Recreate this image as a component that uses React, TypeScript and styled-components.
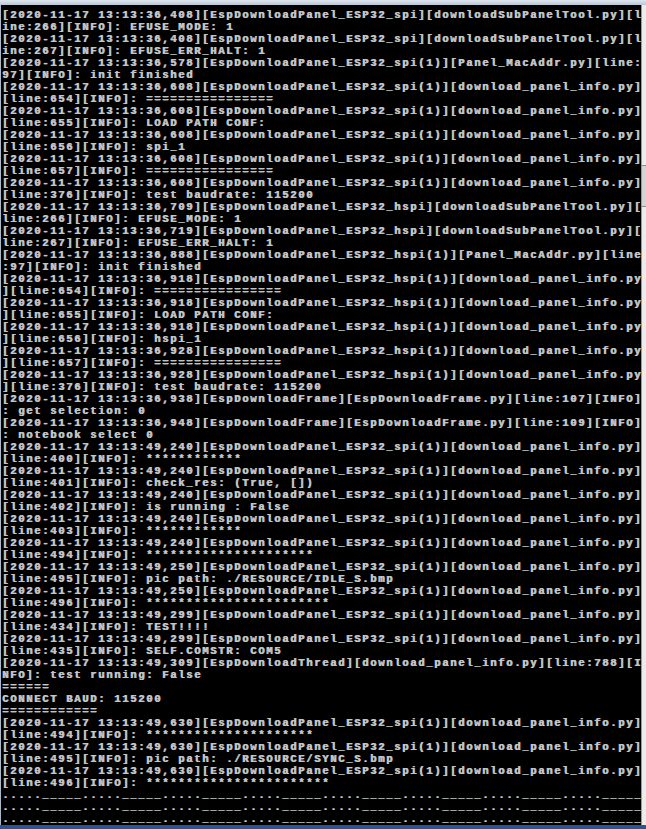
import React from "react";
import styled, { createGlobalStyle } from "styled-components";

const Global = createGlobalStyle`
  html, body { margin: 0; padding: 0; background: #000; }
  body { width: 646px; height: 829px; overflow: hidden; }
`;

const Window = styled.div`
  width: 646px;
  height: 829px;
  display: flex;
  flex-direction: column;
  background: #000;
  overflow: hidden;
`;

const TitleStrip = styled.div`
  height: 5px;
  flex: none;
  background: linear-gradient(to bottom, #dfe6ef, #b9c6d6);
`;

const Body = styled.div`
  flex: 1;
  display: flex;
  min-height: 0;
`;

const Console = styled.pre`
  margin: 0;
  flex: 1;
  padding: 4px 0 0 1px;
  border-left: 1px solid #aeb9c8;
  background: #000;
  color: #c4c4c4;
  font-family: "Liberation Mono", monospace;
  font-weight: bold;
  font-size: 10.5px;
  letter-spacing: 1.7px;
  line-height: 12px;
  text-shadow: 0.7px 0 0 #c4c4c4;
  white-space: pre;
  overflow: hidden;
`;

const Row = styled.div`
  height: 12px;
`;

const Scrollbar = styled.div`
  width: 4px;
  flex: none;
  background: #ececec;
  border-left: 1px solid #9a9a9a;
  display: flex;
  flex-direction: column;
`;

const Thumb = styled.div`
  height: 40px;
  margin-top: 160px;
  background: #d4d4d4;
  border-top: 1px solid #8a8a8a;
  border-bottom: 1px solid #8a8a8a;
`;

const Taskbar = styled.div`
  height: 4px;
  flex: none;
  background: #2d5394;
`;

const T1 = "[2020-11-17 13:13:36,";
const T2 = "[2020-11-17 13:13:49,";
const SPI = "][EspDownloadPanel_ESP32_spi(1)][download_panel_info.py]";
const HSPI = "][EspDownloadPanel_ESP32_hspi(1)][download_panel_info.py]";
const stars = (n: number) => "*".repeat(n);
const eq = (n: number) => "=".repeat(n);

const logical: string[] = [
  T1 + "408][EspDownloadPanel_ESP32_spi][downloadSubPanelTool.py][line:266][INFO]: EFUSE_MODE: 1",
  T1 + "408][EspDownloadPanel_ESP32_spi][downloadSubPanelTool.py][line:267][INFO]: EFUSE_ERR_HALT: 1",
  T1 + "578][EspDownloadPanel_ESP32_spi(1)][Panel_MacAddr.py][line:97][INFO]: init finished",
  T1 + "608" + SPI + "[line:654][INFO]: " + eq(16),
  T1 + "608" + SPI + "[line:655][INFO]: LOAD PATH CONF:",
  T1 + "608" + SPI + "[line:656][INFO]: spi_1",
  T1 + "608" + SPI + "[line:657][INFO]: " + eq(16),
  T1 + "608" + SPI + "[line:376][INFO]: test baudrate: 115200",
  T1 + "709][EspDownloadPanel_ESP32_hspi][downloadSubPanelTool.py][line:266][INFO]: EFUSE_MODE: 1",
  T1 + "719][EspDownloadPanel_ESP32_hspi][downloadSubPanelTool.py][line:267][INFO]: EFUSE_ERR_HALT: 1",
  T1 + "888][EspDownloadPanel_ESP32_hspi(1)][Panel_MacAddr.py][line:97][INFO]: init finished",
  T1 + "918" + HSPI + "[line:654][INFO]: " + eq(16),
  T1 + "918" + HSPI + "[line:655][INFO]: LOAD PATH CONF:",
  T1 + "918" + HSPI + "[line:656][INFO]: hspi_1",
  T1 + "928" + HSPI + "[line:657][INFO]: " + eq(16),
  T1 + "928" + HSPI + "[line:376][INFO]: test baudrate: 115200",
  T1 + "938][EspDownloadFrame][EspDownloadFrame.py][line:107][INFO]: get selection: 0",
  T1 + "948][EspDownloadFrame][EspDownloadFrame.py][line:109][INFO]: notebook select 0",
  T2 + "240" + SPI + "[line:400][INFO]: " + stars(12),
  T2 + "240" + SPI + "[line:401][INFO]: check_res: (True, [])",
  T2 + "240" + SPI + "[line:402][INFO]: is running : False",
  T2 + "240" + SPI + "[line:403][INFO]: " + stars(12),
  T2 + "240" + SPI + "[line:494][INFO]: " + stars(21),
  T2 + "250" + SPI + "[line:495][INFO]: pic path: ./RESOURCE/IDLE_S.bmp",
  T2 + "250" + SPI + "[line:496][INFO]: " + stars(23),
  T2 + "299" + SPI + "[line:434][INFO]: TEST!!!!",
  T2 + "299" + SPI + "[line:435][INFO]: SELF.COMSTR: COM5",
  T2 + "309][EspDownloadThread][download_panel_info.py][line:788][INFO]: test running: False",
  eq(6),
  "CONNECT BAUD: 115200",
  eq(12),
  "[2020-11-17 13:13:49,630" + SPI + "[line:494][INFO]: " + stars(21),
  "[2020-11-17 13:13:49,630" + SPI + "[line:495][INFO]: pic path: ./RESOURCE/SYNC_S.bmp",
  "[2020-11-17 13:13:49,630" + SPI + "[line:496][INFO]: " + stars(23),
  "....._____".repeat(8),
  "....._____".repeat(8),
  "....._____".repeat(8),
];

const COLS = 80;
const rows: string[] = logical.flatMap((line) => {
  const out: string[] = [];
  for (let i = 0; i < line.length; i += COLS) out.push(line.slice(i, i + COLS));
  return out.length ? out : [""];
});

export default function App() {
  return (
    <>
      <Global />
      <Window>
        <TitleStrip />
        <Body>
          <Console>
            {rows.map((r, i) => (
              <Row key={i}>{r}</Row>
            ))}
          </Console>
          <Scrollbar>
            <Thumb />
          </Scrollbar>
        </Body>
        <Taskbar />
      </Window>
    </>
  );
}
